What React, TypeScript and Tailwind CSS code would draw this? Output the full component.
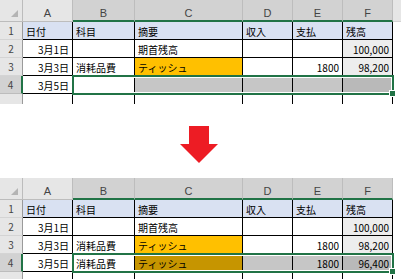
import React from 'react';

type Cell = { text?: string; right?: boolean; bg?: string };

const GREEN = 'border-[#217346]';
const COLS = ['A', 'B', 'C', 'D', 'E', 'F'];
const HEAD_BG = 'bg-[#d9e1f2]';
const BAL_BG = 'bg-[#ededed]';

const baseRows: Cell[][] = [
  [
    { text: '日付', bg: HEAD_BG },
    { text: '科目', bg: HEAD_BG },
    { text: '摘要', bg: HEAD_BG },
    { text: '収入', bg: HEAD_BG },
    { text: '支払', bg: HEAD_BG },
    { text: '残高', bg: HEAD_BG },
  ],
  [
    { text: '3月1日', right: true },
    {},
    { text: '期首残高' },
    {},
    {},
    { text: '100,000', right: true, bg: BAL_BG },
  ],
  [
    { text: '3月3日', right: true },
    { text: '消耗品費' },
    { text: 'ティッシュ', bg: 'bg-[#ffc000]' },
    {},
    { text: '1800', right: true },
    { text: '98,200', right: true, bg: BAL_BG },
  ],
];

const before: Cell[] = [
  { text: '3月5日', right: true },
  {},
  { bg: 'bg-[#c6c6c6]' },
  { bg: 'bg-[#c6c6c6]' },
  { bg: 'bg-[#c6c6c6]' },
  { bg: 'bg-[#b9b9b9]' },
];

const after: Cell[] = [
  { text: '3月5日', right: true },
  { text: '消耗品費' },
  { text: 'ティッシュ', bg: 'bg-[#c69500]' },
  { bg: 'bg-[#c6c6c6]' },
  { text: '1800', right: true, bg: 'bg-[#c6c6c6]' },
  { text: '96,400', right: true, bg: 'bg-[#b9b9b9]' },
];

function Corner() {
  return (
    <div className="flex items-end justify-end border-r border-b border-[#bcbcbc] bg-[#e6e6e6] pr-[4px] pb-[4px]">
      <svg width="7" height="7" viewBox="0 0 7 7">
        <polygon points="7,0 7,7 0,7" fill="#b4b4b4" />
      </svg>
    </div>
  );
}

function RowHead({ n, active }: { n?: number; active?: boolean }) {
  return (
    <div
      className={
        active
          ? 'flex items-center justify-center border-r-2 border-b border-r-[#217346] border-b-[#bcbcbc] bg-[#d2d2d2] text-[#444]'
          : 'flex items-center justify-center border-r border-b border-r-[#9a9a9a] border-b-[#d4d4d4] bg-[#e6e6e6] text-[#444]'
      }
    >
      {n}
    </div>
  );
}

function DataCell({ cell }: { cell: Cell }) {
  return (
    <div
      className={`flex items-center overflow-hidden whitespace-nowrap border-r border-b border-black px-[3px] pt-[1px] ${
        cell.right ? 'justify-end' : 'justify-start'
      } ${cell.bg ?? 'bg-white'}`}
    >
      {cell.text}
    </div>
  );
}

function Sheet({ row4, plainEdge }: { row4: Cell[]; plainEdge?: boolean }) {
  const rows = [...baseRows, row4];
  return (
    <div className="relative overflow-hidden">
      <div className="grid grid-cols-[23px_50px_62px_108px_50px_50px_50px_1fr] grid-rows-[22px_repeat(5,18px)] text-[10px] text-black">
        <Corner />
        {COLS.map((c, i) =>
          i === 0 ? (
            <div
              key={c}
              className="border-r border-b border-[#bdbdbd] bg-[#e6e6e6] pt-[5px] text-center font-['Liberation_Sans',sans-serif] text-[11px] text-[#444]"
            >
              {c}
            </div>
          ) : (
            <div
              key={c}
              className="border-r border-b-2 border-r-[#bdbdbd] border-b-[#217346] bg-[#d2d2d2] pt-[5px] text-center font-['Liberation_Sans',sans-serif] text-[11px] text-[#444]"
            >
              {c}
            </div>
          )
        )}
        <div className={plainEdge ? 'bg-white' : 'border-b border-[#d4d4d4] bg-[#e6e6e6]'} />

        {rows.map((r, ri) => (
          <React.Fragment key={ri}>
            <RowHead n={ri + 1} active={ri === 3} />
            {r.map((cell, ci) => (
              <DataCell key={ci} cell={cell} />
            ))}
            <div className="bg-white" />
          </React.Fragment>
        ))}

        {/* next row, only its top edge shows */}
        <RowHead />
        {COLS.map((c) => (
          <div key={c} className="border-r border-black bg-white" />
        ))}
        <div className="bg-white" />
      </div>

      {/* selection B4:F4 */}
      <div
        className={`pointer-events-none absolute top-[75px] left-[72px] h-[20px] w-[322px] border-2 ${GREEN} shadow-[inset_0_0_0_1px_#ffffff]`}
      />
      <div className="pointer-events-none absolute top-[90px] left-[389px] h-[7px] w-[7px] border border-white bg-[#217346]" />
    </div>
  );
}

export default function App() {
  return (
    <div className="flex h-[279px] w-[401px] flex-col overflow-hidden bg-white font-['Noto_Sans_CJK_JP',sans-serif]">
      <div className="h-[104px] shrink-0 overflow-hidden">
        <Sheet row4={before} />
      </div>
      <div className="h-[74px] shrink-0 pt-[22px] pl-[180px]">
        <svg width="38" height="37" viewBox="0 0 38 37">
          <rect x="9" y="0" width="20" height="19" fill="#ed1c24" />
          <polygon points="0,18 38,18 19,37" fill="#ed1c24" />
        </svg>
      </div>
      <div className="h-[101px] shrink-0 overflow-hidden">
        <Sheet row4={after} plainEdge />
      </div>
    </div>
  );
}
